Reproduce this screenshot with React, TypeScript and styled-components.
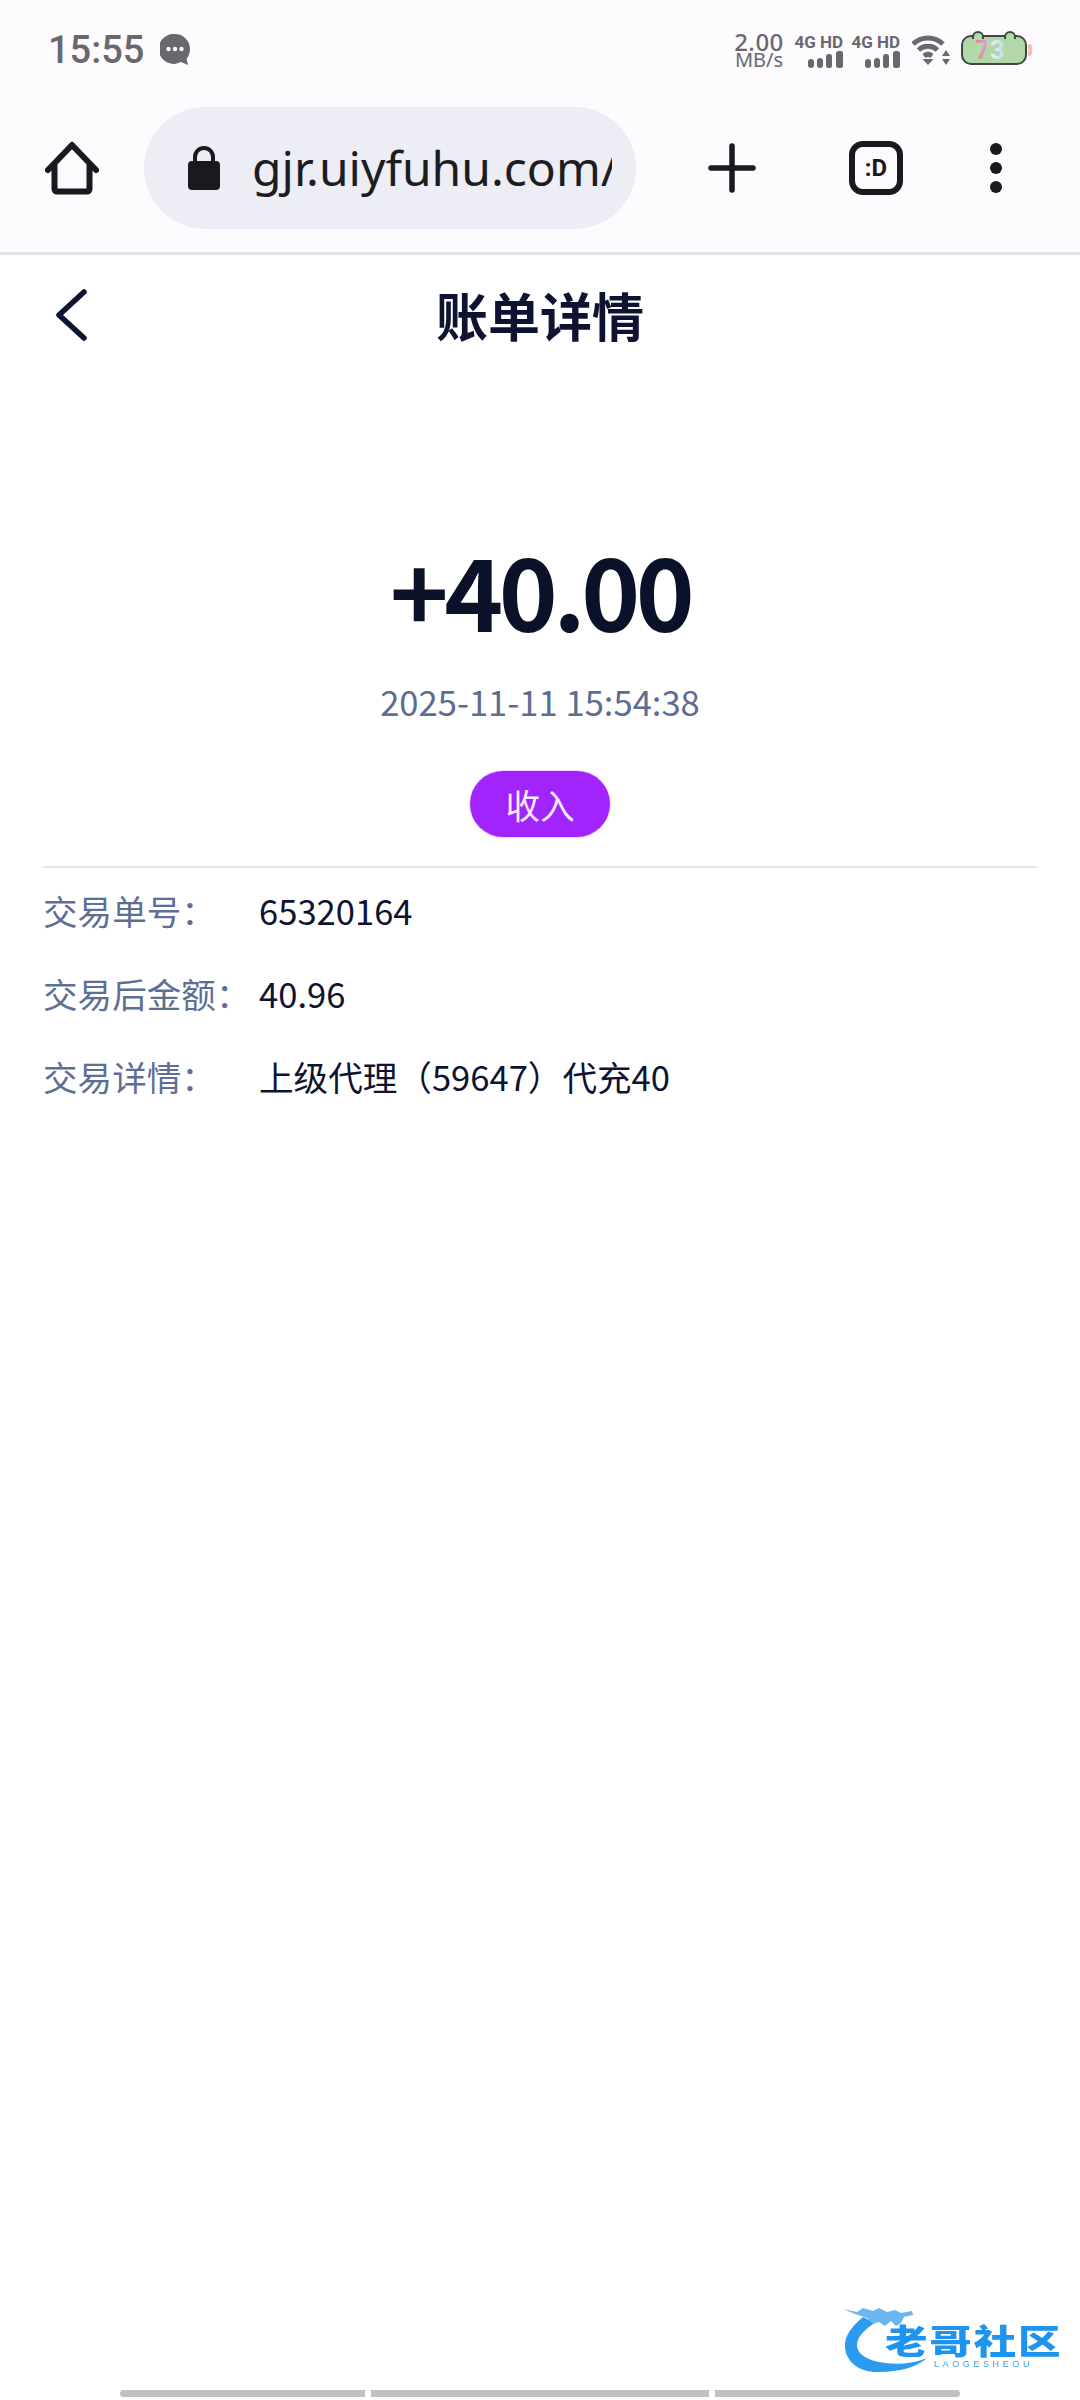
import React from 'react';
import styled, { createGlobalStyle } from 'styled-components';

const GlobalStyle = createGlobalStyle`
  html, body {
    margin: 0;
    padding: 0;
    background: #fff;
  }
  * {
    box-sizing: border-box;
  }
`;

const Page = styled.div`
  position: relative;
  width: 1080px;
  height: 2400px;
  display: flex;
  flex-direction: column;
  overflow: hidden;
  background: #fff;
  font-family: 'Noto Sans CJK SC', 'Noto Sans', sans-serif;
`;

const Chrome = styled.header`
  height: 255px;
  background: #fefbff;
  border-bottom: 3px solid #e3e4e8;
`;

const StatusBar = styled.div`
  height: 100px;
  padding: 0 50px 0 48px;
  display: flex;
  align-items: center;
  justify-content: space-between;
  color: #6a686d;
`;

const StatusLeft = styled.div`
  display: flex;
  align-items: center;
  gap: 16px;
`;

const Time = styled.span`
  font-family: Roboto, sans-serif;
  font-weight: 500;
  font-size: 38px;
  line-height: 1;
`;

const StatusRight = styled.div`
  display: flex;
  align-items: center;
`;

const Speed = styled.div`
  width: 50px;
  margin-right: 11px;
  display: flex;
  flex-direction: column;
  align-items: center;
  font-family: 'Noto Sans', sans-serif;
`;

const SpeedValue = styled.span`
  font-size: 24px;
  font-weight: 500;
  line-height: 18px;
  letter-spacing: 0.5px;
`;

const SpeedUnit = styled.span`
  font-size: 20px;
  line-height: 17px;
  white-space: nowrap;
`;

const Network = styled.div`
  width: 48px;
  margin-right: 9px;
  display: flex;
  flex-direction: column;
  align-items: flex-end;
`;

const NetworkLabel = styled.span`
  font-family: Roboto, sans-serif;
  font-weight: 700;
  font-size: 17px;
  line-height: 18px;
  white-space: nowrap;
`;

const WifiSlot = styled.div`
  margin-left: 3px;
  display: flex;
`;

const Battery = styled.div`
  position: relative;
  width: 66px;
  height: 30px;
  margin-left: 11px;
  margin-right: 3px;
  display: flex;
  align-items: center;
  justify-content: center;
  background: #b2d8a9;
  border: 2px solid #3d4a44;
  border-radius: 10px;
`;

const BatteryEar = styled.span<{ $side: 'left' | 'right' }>`
  position: absolute;
  top: -6px;
  ${(p) => (p.$side === 'left' ? 'left: 9px;' : 'right: 9px;')}
  width: 12px;
  height: 8px;
  background: #b2d8a9;
  border: 2px solid #3d4a44;
  border-bottom: none;
  border-radius: 6px 6px 0 0;
`;

const BatteryNub = styled.span`
  position: absolute;
  right: -7px;
  top: 7px;
  width: 4px;
  height: 12px;
  background: #f7bcc4;
  border-radius: 0 3px 3px 0;
`;

const BatteryLevel = styled.span`
  font-family: Roboto, sans-serif;
  font-weight: 700;
  font-size: 26px;
  line-height: 1;
  margin-left: -8px;
  background: linear-gradient(90deg, #ee8090 0%, #d99bc8 35%, #e6eef5 55%, #b6e0ea 100%);
  -webkit-background-clip: text;
  background-clip: text;
  color: transparent;
`;

const Toolbar = styled.div`
  height: 136px;
  padding-left: 45px;
  display: flex;
  align-items: center;
`;

const ToolIcon = styled.div<{ $gap: number; $width: number }>`
  flex: none;
  width: ${(p) => p.$width}px;
  margin-left: ${(p) => p.$gap}px;
  display: flex;
  justify-content: center;
`;

const UrlPill = styled.div`
  flex: none;
  width: 492px;
  height: 122px;
  margin-left: 45px;
  padding-left: 44px;
  display: flex;
  align-items: center;
  background: #ecedf5;
  border-radius: 61px;
`;

const UrlText = styled.div`
  width: 360px;
  margin-left: 32px;
  overflow: hidden;
  white-space: nowrap;
  font-family: 'Noto Sans', sans-serif;
  font-size: 48px;
  line-height: 60px;
  color: #1d1c22;
`;

const TabCount = styled.div`
  width: 54px;
  height: 54px;
  display: flex;
  align-items: center;
  justify-content: center;
  border: 6px solid #1a191e;
  border-radius: 14px;
  font-family: 'Roboto', sans-serif;
  font-weight: 700;
  font-size: 24px;
  color: #1a191e;
`;

const TitleBar = styled.div`
  height: 120px;
  display: grid;
  grid-template-columns: 1fr auto 1fr;
  align-items: center;
`;

const BackButton = styled.div`
  padding-left: 53px;
  display: flex;
`;

const Title = styled.h1`
  margin: 0;
  font-size: 52px;
  font-weight: 700;
  line-height: 1.2;
  color: #0d1330;
`;

const Summary = styled.section`
  padding-top: 139px;
  display: flex;
  flex-direction: column;
  align-items: center;
`;

const Amount = styled.div`
  font-size: 100px;
  font-weight: 700;
  line-height: 150px;
  letter-spacing: -4.5px;
  color: #0b1129;
`;

const DateText = styled.div`
  margin-top: 12px;
  font-size: 34.6px;
  line-height: 50px;
  color: #5d6d92;
`;

const TypeBadge = styled.div`
  width: 140px;
  height: 66px;
  margin-top: 45px;
  display: flex;
  align-items: center;
  justify-content: center;
  border-radius: 33px;
  background: #a024fb;
  box-shadow: 0 0 0 1px #f6d6ff;
  font-size: 34.6px;
  color: #fbeaff;
`;

const Details = styled.section`
  margin: 29px 43px 0;
  border-top: 2px solid #dfe5ea;
`;

const DetailRow = styled.div`
  height: 83px;
  display: flex;
  align-items: center;
  font-size: 34.6px;
`;

const DetailLabel = styled.span`
  width: 216px;
  color: #5f6f94;
`;

const DetailValue = styled.span`
  color: #0d1330;
`;

const Watermark = styled.div`
  position: absolute;
  left: 843px;
  top: 2305px;
  width: 220px;
  height: 70px;
  filter: blur(0.7px);
`;

const WatermarkDragon = styled.svg`
  position: absolute;
  left: 0;
  top: 0;
`;

const WatermarkName = styled.div`
  position: absolute;
  left: 42px;
  top: 18px;
  font-size: 34px;
  font-weight: 900;
  line-height: 34px;
  letter-spacing: 1.5px;
  white-space: nowrap;
  color: #1f94ee;
  transform: scaleX(1.25);
  transform-origin: left center;
`;

const WatermarkSub = styled.div`
  position: absolute;
  left: 91px;
  top: 54px;
  font-family: 'Liberation Sans', sans-serif;
  font-size: 9px;
  line-height: 10px;
  letter-spacing: 3.6px;
  color: #3a9fe8;
`;

const ScrollTrack = styled.div`
  position: absolute;
  left: 120px;
  bottom: 3px;
  width: 840px;
  height: 7px;
  display: flex;
  gap: 6px;
`;

const ScrollPiece = styled.div<{ $grow: number }>`
  flex: ${(p) => p.$grow} 0 0;
  background: #c0c0c0;
  &:first-child {
    border-radius: 4px 0 0 4px;
  }
  &:last-child {
    border-radius: 0 4px 4px 0;
  }
`;

const ChatBubble = () => (
  <svg width="30" height="32" viewBox="0 0 30 32">
    <path d="M15 0a15 15 0 0 1 15 15c0 4-1.500 7.500-3.500 10l1.500 6-7-3a15 15 0 1 1-6-28z" fill="#6a686d" />
    <circle cx="8.500" cy="15" r="2.200" fill="#fefbff" />
    <circle cx="15" cy="15" r="2.200" fill="#fefbff" />
    <circle cx="21.500" cy="15" r="2.200" fill="#fefbff" />
  </svg>
);

const SignalBars = () => (
  <svg width="35" height="17" viewBox="0 0 35 17">
    <rect x="0" y="8" width="6" height="9" rx="3" fill="#6a686d" />
    <rect x="9" y="7" width="6" height="10" rx="3" fill="#6a686d" />
    <rect x="18" y="3" width="6" height="14" rx="2.500" fill="#6a686d" />
    <rect x="28" y="0" width="7" height="17" rx="2.500" fill="#6a686d" />
  </svg>
);

const WifiIcon = () => (
  <svg width="38" height="30" viewBox="0 0 38 30">
    <path d="M1 9c8.500-8 21.500-8 30 0M6.500 15c5.500-5 13.500-5 19 0M12 21c2.500-2 5.500-2 8 0" fill="none" stroke="#6a686d" strokeWidth="5" />
    <path d="M10.500 24h11L16 30z" fill="#6a686d" />
    <path d="M34 15l4 6h-8zM30 24h8l-4 6z" fill="#6a686d" />
  </svg>
);

const HomeIcon = () => (
  <svg width="54" height="54" viewBox="0 0 54 54">
    <path d="M3 29L27 4l24 25M9.500 23v25c0 1.500 1 2.500 2.500 2.500h30c1.500 0 2.500-1 2.500-2.500V23" fill="none" stroke="#1a191e" strokeWidth="6" strokeLinecap="round" strokeLinejoin="round" />
  </svg>
);

const LockIcon = () => (
  <svg width="32" height="44" viewBox="0 0 32 44" style={{ flex: 'none' }}>
    <path d="M7 18v-7a9 9 0 0 1 18 0v7" fill="none" stroke="#1a191e" strokeWidth="4" />
    <rect x="0" y="15" width="32" height="29" rx="4" fill="#1a191e" />
  </svg>
);

const PlusIcon = () => (
  <svg width="48" height="50" viewBox="0 0 48 50">
    <path d="M24 3v44M3 25h42" stroke="#1a191e" strokeWidth="5.500" strokeLinecap="round" />
  </svg>
);

const DotsIcon = () => (
  <svg width="14" height="50" viewBox="0 0 14 50">
    <circle cx="7" cy="6" r="6" fill="#1a191e" />
    <circle cx="7" cy="25" r="6" fill="#1a191e" />
    <circle cx="7" cy="44" r="6" fill="#1a191e" />
  </svg>
);

const BackIcon = () => (
  <svg width="36" height="54" viewBox="0 0 36 54">
    <path d="M31 4L6 27l25 23" fill="none" stroke="#0d1330" strokeWidth="5.500" strokeLinecap="round" strokeLinejoin="round" />
  </svg>
);

const DragonIcon = () => (
  <WatermarkDragon width="220" height="70" viewBox="0 0 220 70">
    <path d="M20 12C8 22 1 32 2 42c1 16 16 26 34 25 20 0 38-5 48-14-12 5-28 7-42 5C26 56 14 50 14 40c0-8 8-16 18-22z" fill="#2b9bf0" />
    <path d="M0 4l14 3 6-4 10 3 6-3 8 4 8-2 6 3 11-2 1 4-9 2-3 6-5 3-5-5-6 5-6-4-6 2-6-6-12-4z" fill="#6ab6ee" />
  </WatermarkDragon>
);

const App = () => (
  <Page>
    <GlobalStyle />
    <Chrome>
      <StatusBar>
        <StatusLeft>
          <Time>15:55</Time>
          <ChatBubble />
        </StatusLeft>
        <StatusRight>
          <Speed>
            <SpeedValue>2.00</SpeedValue>
            <SpeedUnit>MB/s</SpeedUnit>
          </Speed>
          <Network>
            <NetworkLabel>4G HD</NetworkLabel>
            <SignalBars />
          </Network>
          <Network>
            <NetworkLabel>4G HD</NetworkLabel>
            <SignalBars />
          </Network>
          <WifiSlot>
            <WifiIcon />
          </WifiSlot>
          <Battery>
            <BatteryEar $side="left" />
            <BatteryEar $side="right" />
            <BatteryLevel>73</BatteryLevel>
            <BatteryNub />
          </Battery>
        </StatusRight>
      </StatusBar>
      <Toolbar>
        <ToolIcon $gap={0} $width={54}>
          <HomeIcon />
        </ToolIcon>
        <UrlPill>
          <LockIcon />
          <UrlText>gjr.uiyfuhu.com/</UrlText>
        </UrlPill>
        <ToolIcon $gap={72} $width={48}>
          <PlusIcon />
        </ToolIcon>
        <ToolIcon $gap={93} $width={54}>
          <TabCount>:D</TabCount>
        </ToolIcon>
        <ToolIcon $gap={86} $width={14}>
          <DotsIcon />
        </ToolIcon>
      </Toolbar>
    </Chrome>
    <TitleBar>
      <BackButton>
        <BackIcon />
      </BackButton>
      <Title>账单详情</Title>
    </TitleBar>
    <Summary>
      <Amount>+40.00</Amount>
      <DateText>2025-11-11 15:54:38</DateText>
      <TypeBadge>收入</TypeBadge>
    </Summary>
    <Details>
      <DetailRow>
        <DetailLabel>交易单号：</DetailLabel>
        <DetailValue>65320164</DetailValue>
      </DetailRow>
      <DetailRow>
        <DetailLabel>交易后金额：</DetailLabel>
        <DetailValue>40.96</DetailValue>
      </DetailRow>
      <DetailRow>
        <DetailLabel>交易详情：</DetailLabel>
        <DetailValue>上级代理（59647）代充40</DetailValue>
      </DetailRow>
    </Details>
    <Watermark>
      <DragonIcon />
      <WatermarkName>老哥社区</WatermarkName>
      <WatermarkSub>LAOGESHEOU</WatermarkSub>
    </Watermark>
    <ScrollTrack>
      <ScrollPiece $grow={245} />
      <ScrollPiece $grow={337} />
      <ScrollPiece $grow={245} />
    </ScrollTrack>
  </Page>
);

export default App;
